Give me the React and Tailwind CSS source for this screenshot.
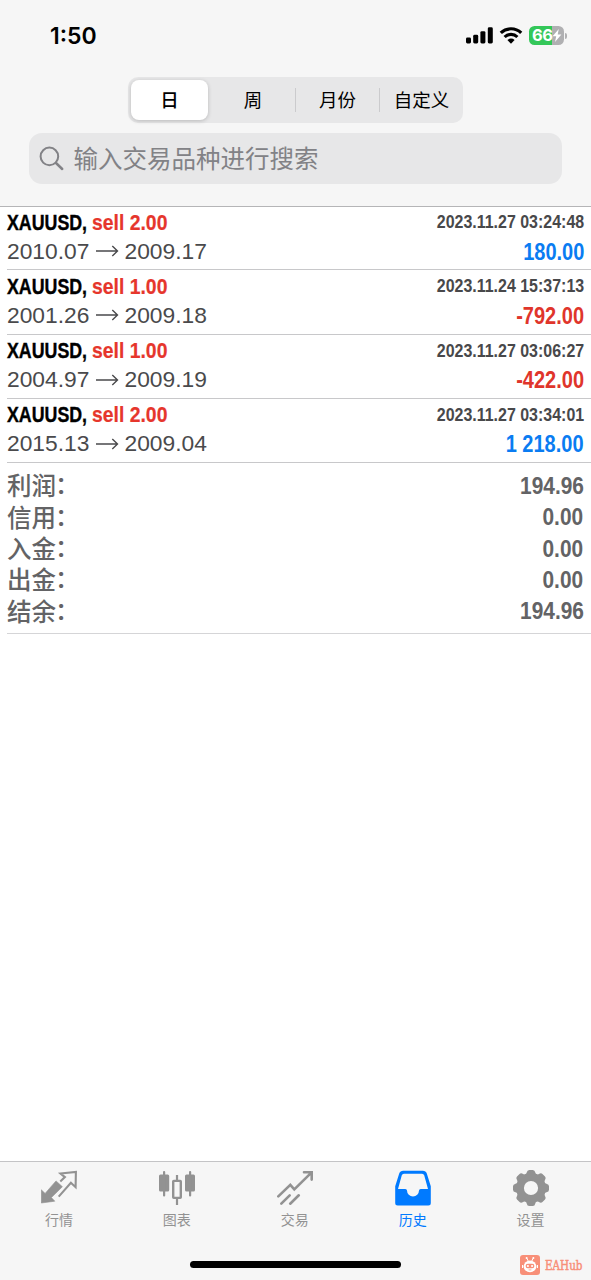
import React from "react";

const deals = [
  { volume: "2.00", open: "2010.07", close: "2009.17", time: "2023.11.27 03:24:48", profit: "180.00" },
  { volume: "1.00", open: "2001.26", close: "2009.18", time: "2023.11.24 15:37:13", profit: "-792.00" },
  { volume: "1.00", open: "2004.97", close: "2009.19", time: "2023.11.27 03:06:27", profit: "-422.00" },
  { volume: "2.00", open: "2015.13", close: "2009.04", time: "2023.11.27 03:34:01", profit: "1 218.00" },
];

const totals = [
  ["利润", "194.96"],
  ["信用", "0.00"],
  ["入金", "0.00"],
  ["出金", "0.00"],
  ["结余", "194.96"],
];

function StatusBar() {
  return (
    <div className="flex h-[70px] items-center justify-between pl-[50px] pr-[24px] pt-[1px]">
      <span className="pt-[1px] font-['Inter'] text-[23px] font-semibold leading-none text-black">1:50</span>
      <div className="flex items-center">
        <svg className="h-[17px] w-[27px]" viewBox="0 0 27 17">
          <rect x="0" y="10.5" width="5" height="6" rx="1.4" />
          <rect x="7.2" y="7.8" width="5" height="8.7" rx="1.4" />
          <rect x="14.4" y="4.2" width="5" height="12.3" rx="1.4" />
          <rect x="21.8" y="0.3" width="5" height="16.2" rx="1.4" />
        </svg>
        <svg className="ml-[6px] h-[17px] w-[24px]" viewBox="0 0 24 17">
          <path d="M1.8 5.9a14.6 14.6 0 0 1 20.4 0" fill="none" stroke="#000" strokeWidth="3.2" />
          <path d="M5.6 10a9.1 9.1 0 0 1 12.8 0" fill="none" stroke="#000" strokeWidth="3.1" />
          <path d="M12 16.7 8.4 13.1a5.1 5.1 0 0 1 7.2 0Z" />
        </svg>
        <div className="ml-[6px] flex h-[19.5px] w-[35px] items-center overflow-hidden rounded-[5.5px] bg-[linear-gradient(90deg,#34c759_66%,#b0b0b2_66%)] pl-[3px]">
          <span className="font-['Inter'] text-[16.5px] font-bold leading-none tracking-[-0.5px] text-white">66</span>
          <svg className="h-[13px] w-[10px] shrink-0" viewBox="0 0 10 13">
            <path d="M6.8 0 .6 7.2h3.6L3 13l6.4-7.5H5.7Z" fill="#fff" />
          </svg>
        </div>
        <div className="ml-[1px] h-[6px] w-[2px] rounded-r-full bg-[#b0b0b2]" />
      </div>
    </div>
  );
}

function Header() {
  return (
    <header className="h-[207px] shrink-0 border-b border-[#b5b5b7] bg-[#f6f6f6]">
      <StatusBar />
      <div className="ml-[128px] mt-[7px] flex h-[46px] w-[335px] items-center rounded-[10px] bg-[#e7e7e8] text-[18.5px] leading-none text-black">
        <div className="ml-[3px] flex h-[40px] w-[77px] items-center justify-center rounded-[8px] bg-white pt-[2px] font-medium shadow-[0_1px_4px_rgba(0,0,0,0.2)]">日</div>
        <div className="flex h-6 w-[88px] items-center justify-center border-r border-[#cbcbcd] pl-[3px] pt-[2px]">周</div>
        <div className="flex h-6 w-[84px] items-center justify-center border-r border-[#cbcbcd] pt-[2px]">月份</div>
        <div className="flex h-6 w-[83px] items-center justify-center pt-[2px]">自定义</div>
      </div>
      <div className="ml-[29px] mt-[10px] flex h-[51px] w-[533px] items-center rounded-[13px] bg-[#e7e7e8] pl-[10px] text-[#828286]">
        <svg className="h-[25px] w-[25px]" viewBox="0 0 25 25" fill="none" stroke="currentColor" strokeLinecap="round">
          <circle cx="10.4" cy="10.4" r="8.8" strokeWidth="2" />
          <path d="m17 17 6.2 6" strokeWidth="2.5" />
        </svg>
        <span className="ml-[9.5px] pt-[3px] text-[24.5px] leading-none">输入交易品种进行搜索</span>
      </div>
    </header>
  );
}

function DealRow({ deal }) {
  const tone = deal.profit.startsWith("-") ? "text-[#e0352b]" : "text-[#0a7cf2]";
  return (
    <div className="flex h-[64.3px] flex-col border-b border-[#c8c8ca] pr-[7px] pt-[1px]">
      <div className="flex h-[30px] items-center font-bold leading-none">
        <span className="w-[84.5px] origin-left scale-x-[0.78] whitespace-nowrap text-[22.8px] text-black [-webkit-text-stroke:0.4px_#000]">XAUUSD,</span>
        <span className="w-[80px] origin-left scale-x-[0.85] whitespace-nowrap text-[22.8px] text-[#e6362c] [-webkit-text-stroke:0.2px_#e6362c]">sell {deal.volume}</span>
        <span className="ml-auto origin-right scale-x-[0.887] whitespace-nowrap text-[18px] text-[#48484a]">{deal.time}</span>
      </div>
      <div className="flex h-[28px] items-center leading-none">
        <span className="w-[83px] text-[22.8px] text-[#4a4a4c]">{deal.open}</span>
        <svg className="ml-[6px] h-[12px] w-[23px]" viewBox="0 0 23 12" fill="none" stroke="#4a4a4c" strokeWidth="1.4">
          <path d="M0 6h21.5M16.3 1l5.2 5-5.2 5" />
        </svg>
        <span className="ml-[5.5px] text-[22.8px] text-[#4a4a4c]">{deal.close}</span>
        <span className={"ml-auto origin-right scale-x-[0.87] whitespace-nowrap pt-[2px] text-[23px] font-bold " + tone}>{deal.profit}</span>
      </div>
    </div>
  );
}

function Totals() {
  return (
    <div className="h-[171px] border-b border-[#d5d5d7] pr-[7.5px] pt-[7.5px] text-[#636365]">
      {totals.map(([label, value]) => (
        <div key={label} className="flex h-[31.4px] items-center justify-between leading-none">
          <span className="flex pt-[2px] text-[24.5px] font-medium">
            {label}
            <span className="-ml-[1px] -mt-[1px]">：</span>
          </span>
          <span className="origin-right scale-x-[0.9] text-[23.2px] font-bold">{value}</span>
        </div>
      ))}
    </div>
  );
}

function QuotesIcon() {
  return (
    <svg className="h-9 w-9" viewBox="0 0 36 36">
      <path d="M.3 33V19.8l3.8 3.6L15 10.9l6.4 5.8L10.4 27.6l3.4 3.6Z" fill="#929292" stroke="#929292" strokeWidth="0.6" strokeLinejoin="round" />
      <path d="m19.3 11.4 4.6-4.3-4.4-3.6L34.9 1.9 34.6 17.2l-4.7-4.4L17.7 26.6" fill="none" stroke="#929292" strokeWidth="2.1" />
    </svg>
  );
}

function ChartIcon() {
  return (
    <svg className="h-9 w-9" viewBox="0 0 36 36" fill="#929292">
      <rect x="0" y="4.5" width="10.2" height="17" rx="1.5" />
      <rect x="4" y="1" width="2.2" height="25.5" rx="1" />
      <rect x="26" y="4.5" width="10" height="17" rx="1.5" />
      <rect x="30" y="1" width="2.2" height="25.5" rx="1" />
      <rect x="14.2" y="10.9" width="7.6" height="17" rx="0.6" fill="none" stroke="#929292" strokeWidth="2.4" />
      <path d="M16.9 5h2.2v6h-2.2zM16.9 28h2.2v7h-2.2z" />
    </svg>
  );
}

function TradeIcon() {
  return (
    <svg className="h-9 w-9" viewBox="0 0 36 36" fill="none" stroke="#929292" strokeWidth="2.6" strokeLinecap="round">
      <path d="m1.3 26.4 12-11.6 4 4.6L33.6 3.4M27 2.3h7.7v7.3" />
      <path d="m4.3 33.7 8.4-8.4M13.2 33.7l8.6-8.4" />
    </svg>
  );
}

function HistoryIcon() {
  return (
    <svg className="h-9 w-9" viewBox="0 0 36 36">
      <path fill="#007aff" fillRule="evenodd" d="M8.2.8h19.6q3 0 4 2.8l4 12.7v16.6q0 2.5-2.5 2.5H2.7q-2.5 0-2.5-2.5V16.3L4.2 3.6Q5.2.8 8.2.8ZM9 3.7Q7.3 3.7 6.8 5.3L3 18.9h7.2q1.8 0 1.8 1.7a6 6 0 0 0 12 0q0-1.7 1.8-1.7H33L29.2 5.3q-.5-1.6-2.2-1.6Z" />
    </svg>
  );
}

function SettingsIcon() {
  return (
    <svg className="h-9 w-9" viewBox="-18 -18 36 36" fill="#929292">
      <circle r="11" fill="none" stroke="#929292" strokeWidth="7.8" />
      {[0, 45, 90, 135, 180, 225, 270, 315].map((angle) => (
        <path key={angle} transform={`rotate(${angle})`} d="M-6-12.5Q-4.8-13.5-4.3-15.5-3.8-18-1.8-18H1.8Q3.8-18 4.3-15.5 4.8-13.5 6-12.5Z" />
      ))}
    </svg>
  );
}

const tabs = [
  { label: "行情", Icon: QuotesIcon },
  { label: "图表", Icon: ChartIcon },
  { label: "交易", Icon: TradeIcon },
  { label: "历史", Icon: HistoryIcon, active: true },
  { label: "设置", Icon: SettingsIcon },
];

function HubBadge() {
  return (
    <div className="absolute bottom-[5px] right-[9px] flex items-center">
      <svg className="h-5 w-5" viewBox="0 0 20 20">
        <rect width="20" height="20" rx="3" fill="#f88f78" />
        <path d="m6.8 3.2 1.6 3.2M13.2 3.2l-1.6 3.2" stroke="#fff" strokeWidth="1" />
        <circle cx="6.6" cy="3" r="1" fill="#fff" />
        <circle cx="13.4" cy="3" r="1" fill="#fff" />
        <ellipse cx="10" cy="11.4" rx="6.3" ry="5.8" fill="#fff" />
        <path d="M2.6 10v3M17.4 10v3" stroke="#fff" strokeWidth="1.2" />
        <rect x="5.6" y="8.8" width="8.8" height="4.4" rx="2.2" fill="#f88f78" />
        <circle cx="7.9" cy="11" r="1.1" fill="#fff" />
        <circle cx="12.1" cy="11" r="1.1" fill="#fff" />
        <path d="M8.6 14.9h2.8" stroke="#f88f78" strokeWidth="0.7" />
      </svg>
      <span className="ml-[5px] w-[37px] origin-left scale-x-[0.8] whitespace-nowrap font-['DejaVu_Serif',serif] text-[13px] leading-none text-[#f88f78] [-webkit-text-stroke:0.5px_#f88f78]">EAHub</span>
    </div>
  );
}

export default function App() {
  return (
    <div className="relative flex h-[1280px] w-[591px] flex-col overflow-hidden bg-white font-['Liberation_Sans','Noto_Sans_CJK_SC',sans-serif]">
      <Header />
      <main className="-mt-[1px] flex-1 pl-[7px]">
        {deals.map((deal) => (
          <DealRow key={deal.open} deal={deal} />
        ))}
        <Totals />
      </main>
      <nav className="flex h-[119.5px] shrink-0 flex-col items-center border-t border-[#c4c4c6] bg-[#f6f6f6]">
        <div className="flex h-[99.5px] w-full pr-[1.5px]">
          {tabs.map(({ label, Icon, active }) => (
            <div key={label} className="flex flex-1 flex-col items-center pt-[8.5px]">
              <Icon />
              <span className={"mt-[7px] text-[14px] leading-none " + (active ? "text-[#007aff]" : "text-[#929292]")}>{label}</span>
            </div>
          ))}
        </div>
        <div className="h-[7px] w-[211px] rounded-full bg-black" />
      </nav>
      <HubBadge />
    </div>
  );
}
